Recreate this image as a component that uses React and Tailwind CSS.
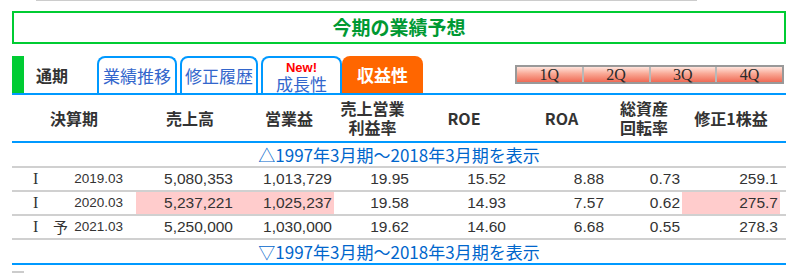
import React from "react";

const cols = [
  { w: "w-[99px]", head: ["売上高"], shift: true },
  { w: "w-[99px]", head: ["営業益"], shift: true },
  { w: "w-[77px]", head: ["売上営業", "利益率"] },
  { w: "w-[97px]", head: ["ROE"], shift: true },
  { w: "w-[98px]", head: ["ROA"], shift: true },
  { w: "w-[76px]", head: ["総資産", "回転率"] },
  { w: "w-[98px]", head: ["修正1株益"] },
];

const rows = [
  { yo: "", d: "2019.03", v: ["5,080,353", "1,013,729", "19.95", "15.52", "8.88", "0.73", "259.1"], hl: [] },
  { yo: "", d: "2020.03", v: ["5,237,221", "1,025,237", "19.58", "14.93", "7.57", "0.62", "275.7"], hl: [0, 1, 6] },
  { yo: "予", d: "2021.03", v: ["5,250,000", "1,030,000", "19.62", "14.60", "6.68", "0.55", "278.3"], hl: [] },
];

const jp = "font-['Noto_Sans_CJK_JP','Liberation_Sans',sans-serif]";

function Tab({ w, children }) {
  return (
    <div
      className={`${w} h-[37px] mr-[3px] border-2 border-b-0 border-[#0099ff] rounded-t-[8px] bg-white flex flex-col items-center justify-center text-[17px] leading-[18px] text-[#3366cc] ${jp}`}
    >
      {children}
    </div>
  );
}

export default function App() {
  return (
    <div className="w-[798px] h-[273px] overflow-hidden bg-white text-[#333] font-['Liberation_Sans','Noto_Sans_CJK_JP',sans-serif]">
      <div className="ml-[36px] w-[661px] h-px bg-[#cccccc]" />

      <div className="mx-[12px] mt-[10px] h-[33px] border-2 border-[#00cc33] flex items-center justify-center">
        <span className={`text-[19px] font-bold text-[#009933] ${jp}`}>今期の業績予想</span>
      </div>

      {/* tabs */}
      <div className="mx-[12px] mt-[12px] h-[37px] flex items-end">
        <div className="w-[12px] h-full bg-[#00cc33]" />
        <div className={`w-[73px] h-full pl-[12px] flex items-center text-[16px] font-bold text-[#333] ${jp}`}>
          通期
        </div>
        <Tab w="w-[80px]">業績推移</Tab>
        <Tab w="w-[78px]">修正履歴</Tab>
        <div
          className={`w-[81px] h-[37px] border-2 border-b-0 border-[#0099ff] rounded-t-[8px] bg-white flex flex-col items-center pt-[3px] ${jp}`}
        >
          <span className="text-[13px] leading-[14px] font-bold text-[#ff0000] font-['Liberation_Sans',sans-serif]">
            New!
          </span>
          <span className="text-[17px] leading-[18px] text-[#3366cc]">成長性</span>
        </div>
        <div
          className={`w-[81px] h-[37px] rounded-t-[8px] bg-[#ff6600] flex items-center justify-center text-[17px] font-bold text-white ${jp}`}
        >
          収益性
        </div>

        <div className="ml-auto mr-[2px] mb-[9px] w-[269px] h-[19px] border-2 border-[#999999] flex">
          {["1Q", "2Q", "3Q", "4Q"].map((q, i) => (
            <div
              key={q}
              className={`flex-1 flex items-center justify-center bg-[linear-gradient(to_bottom,#ffe4dc_0%,#f9a895_45%,#ef6a55_100%)] text-[16px] leading-none text-[#2a2a2a] font-['Liberation_Serif',serif] ${
                i > 0 ? "border-l-2 border-[#b8b8b8]" : ""
              }`}
            >
              {q}
            </div>
          ))}
        </div>
      </div>
      <div className="mx-[12px] h-[2px] bg-[#0099ff]" />

      {/* header */}
      <div className={`mx-[12px] h-[48px] flex border-b-2 border-[#0099ff] font-bold text-[16px] leading-[19px] text-[#333] ${jp}`}>
        <div className="w-[124px] flex items-center justify-center">決算期</div>
        {cols.map((c, i) => (
          <div
            key={i}
            className={`${c.w} flex flex-col items-center justify-center ${c.shift ? "pl-[9px]" : ""}`}
          >
            {c.head.map((h) => (
              <span key={h}>{h}</span>
            ))}
          </div>
        ))}
      </div>

      <div
        className={`mx-[12px] h-[25px] flex items-center justify-center border-b-2 border-[#d0d0d0] text-[17px] text-[#0066cc] ${jp}`}
      >
        △1997年3月期～2018年3月期を表示
      </div>

      {rows.map((r, ri) => (
        <div key={ri} className="mx-[12px] h-[24px] flex border-b-2 border-[#d0d0d0]">
          <div className="w-[124px] flex items-center">
            <span className="w-[41px] pl-[21px] text-[16px] font-['Liberation_Serif',serif]">I</span>
            <span className={`w-[16px] text-[15px] ${jp}`}>{r.yo}</span>
            <span className="flex-1 text-right pr-[13px] text-[13.5px]">{r.d}</span>
          </div>
          {r.v.map((v, i) => (
            <div
              key={i}
              className={`${cols[i].w} flex items-center justify-end pr-[2px] text-[15.5px] ${
                r.hl.includes(i) ? "bg-[#ffcccc]" : ""
              }`}
            >
              {v}
            </div>
          ))}
        </div>
      ))}

      <div
        className={`mx-[12px] h-[25px] flex items-center justify-center border-b-2 border-[#0099ff] text-[17px] text-[#0066cc] ${jp}`}
      >
        ▽1997年3月期～2018年3月期を表示
      </div>

      <div className="ml-[12px] mt-[6px] w-[12px] h-[2px] bg-[#cccccc]" />
    </div>
  );
}
